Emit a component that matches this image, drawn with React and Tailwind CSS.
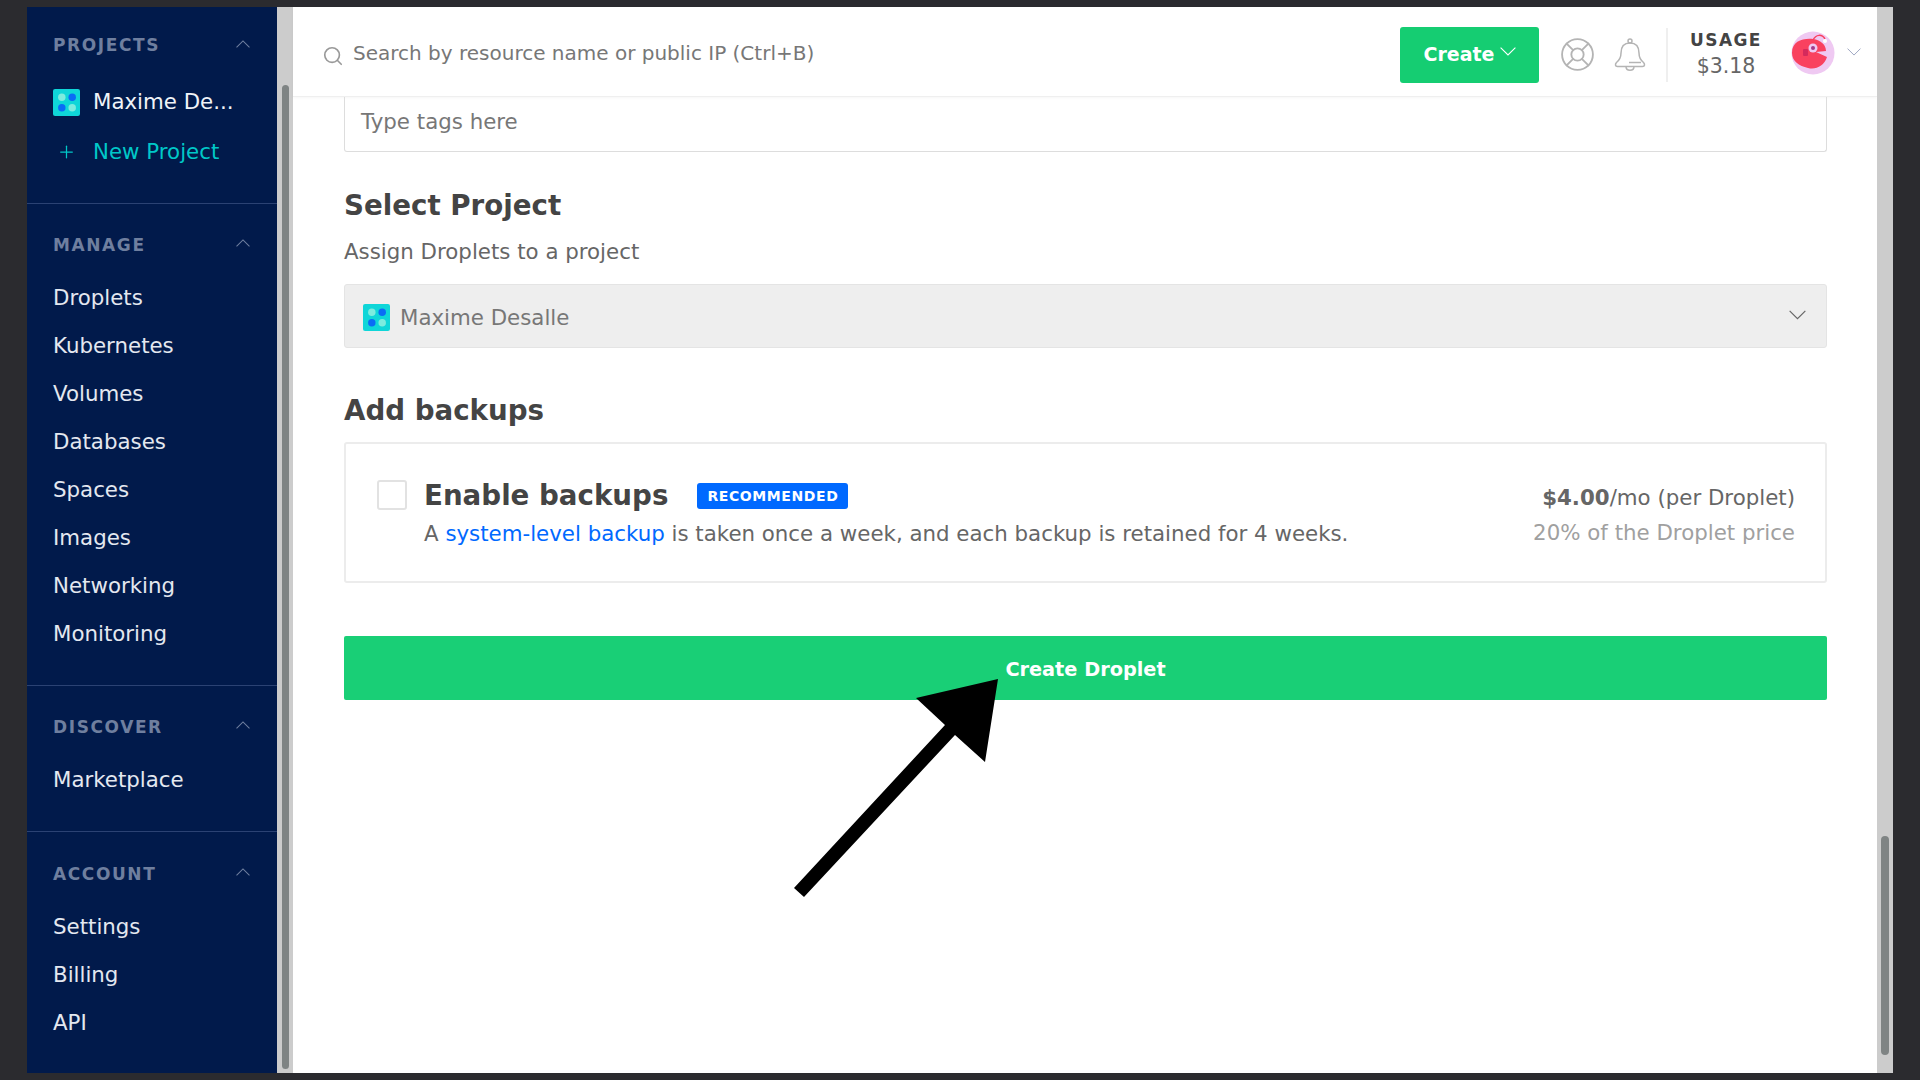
import React from "react";
import { Plus, Search, LifeBuoy } from "lucide-react";

const Logo = ({ className }) => (
  <svg viewBox="0 0 26 26" className={className}>
    <rect width="26" height="26" rx="2" fill="#0fd6d8" />
    <circle cx="8.5" cy="8" r="3.6" fill="#7cecdf" />
    <circle cx="18.5" cy="8" r="3.6" fill="#0a6cf5" />
    <circle cx="8.5" cy="18" r="3.6" fill="#0a6cf5" />
    <circle cx="18.5" cy="18" r="3.6" fill="#7cecdf" />
  </svg>
);

const ChevD = ({ className }) => (
  <svg viewBox="0 0 16 9" fill="none" stroke="currentColor" strokeWidth="1.1" className={className}>
    <polyline points="0.6,0.6 8,8 15.4,0.6" />
  </svg>
);
const ChevU = ({ className }) => (
  <svg viewBox="0 0 16 9" fill="none" stroke="currentColor" strokeWidth="1.2" className={className}>
    <polyline points="0.6,8.4 8,1 15.4,8.4" />
  </svg>
);

const Section = ({ title, items, last }) => (
  <div className={last ? "pl-[26px] pr-[27px] pt-[33px]" : "pl-[26px] pr-[27px] pt-[32px] pb-[27px] border-b border-[#2b4273]"}>
    <div className="flex items-center justify-between h-[20px] mb-[18px]">
      <span className="text-[17px] font-bold tracking-[1.6px] text-[#6f7f9f]">{title}</span>
      <ChevU className="w-[14px] h-[8px] text-[#6f7f9f] -mt-[6px]" />
    </div>
    <div className="flex flex-col">
      {items.map((t) => (
        <div key={t} className="h-[48px] flex items-center text-[21.33px] text-[#e4e8f0]">{t}</div>
      ))}
    </div>
  </div>
);

export default function App() {
  return (
    <div className="relative w-screen h-screen overflow-hidden bg-[#2b2b2f] px-[27px] py-[7px] font-['DejaVu_Sans',sans-serif]">
      <div className="flex h-full">
        <aside className="w-[250px] shrink-0 bg-[#011a4b] overflow-hidden">
          <div className="pt-[29px] pl-[26px] pr-[27px] pb-[26px] border-b border-[#2b4273]">
            <div className="flex items-center justify-between h-[20px] mb-[21px]">
              <span className="text-[17px] font-bold tracking-[1.6px] text-[#6f7f9f]">PROJECTS</span>
              <ChevU className="w-[14px] h-[8px] text-[#6f7f9f] -mt-[4px]" />
            </div>
            <div className="flex items-center h-[50px] gap-[13px]">
              <Logo className="w-[27px] h-[27px]" />
              <span className="text-[21.33px] text-[#f0f3f8]">Maxime De...</span>
            </div>
            <div className="flex items-center h-[50px] gap-[13px] text-[#00c8c8]">
              <Plus className="w-[27px] h-[20px]" strokeWidth={1.5} />
              <span className="text-[21.33px]">New Project</span>
            </div>
          </div>
          <Section title="MANAGE" items={["Droplets", "Kubernetes", "Volumes", "Databases", "Spaces", "Images", "Networking", "Monitoring"]} />
          <Section title="DISCOVER" items={["Marketplace"]} />
          <Section title="ACCOUNT" items={["Settings", "Billing", "API"]} last />
        </aside>

        <div className="w-[16px] shrink-0 bg-[#cccccc] pl-[5px] pr-[4px] pt-[78px] pb-[4px]">
          <div className="h-full rounded-full bg-[#7f8484]" />
        </div>

        <main className="flex-1 min-w-0 bg-white flex flex-col">
          <header className="h-[90px] shrink-0 flex items-center border-b border-[#efefef] shadow-[0_1px_3px_rgba(0,0,0,0.04)] pl-[29px] pr-[13px] pt-[6px]">
            <Search className="w-[22px] h-[22px] text-[#999999] mt-[2px]" strokeWidth={1.8} />
            <span className="ml-[9px] text-[20px] text-[#777777] -mt-[4px]">Search by resource name or public IP (Ctrl+B)</span>
            <div className="flex-1" />
            <button className="w-[139px] h-[56px] rounded-[3px] bg-[#15cd72] text-white font-bold text-[19px] flex items-center justify-center gap-[5px]">
              Create<ChevD className="w-[16px] h-[9px] -mt-[6px]" />
            </button>
            <LifeBuoy className="ml-[20px] w-[37px] h-[37px] text-[#b4b4b4]" strokeWidth={1.2} />
            <svg viewBox="0 0 32 34" fill="none" stroke="#b4b4b4" strokeWidth="1.5" className="ml-[18px] w-[32px] h-[34px]">
              <circle cx="16" cy="3" r="2" />
              <path d="M16 5 C9 5 7 10 7 15 C7 20 5.5 22 2.5 24.5 C1 26 1 28.5 3.5 28.5 L28.5 28.5 C31 28.5 31 26 29.5 24.5 C26.5 22 25 20 25 15 C25 10 23 5 16 5 Z" />
              <path d="M12 28.5 C12 33.5 20 33.5 20 28.5" />
              <path d="M15 24.5 L27 24.5" />
            </svg>
            <div className="ml-[20px] w-[2px] h-[54px] bg-[#efefef]" />
            <div className="w-[116px] flex flex-col items-center">
              <span className="text-[17px] font-bold tracking-[1.4px] text-[#444444] leading-[24px] -mt-[1px]">USAGE</span>
              <span className="text-[20.5px] text-[#666666] leading-[28px]">$3.18</span>
            </div>
            <svg viewBox="0 0 44 44" className="ml-[7px] w-[44px] h-[44px] -mt-[3px]">
              <circle cx="22" cy="22" r="21.5" fill="#efc9f2" />
              <path d="M1 22 C1 10 12 7 22 8 C30 9 35 14 35 20 L25 21 L36 26 C33 35 25 39 17 37 C8 35 1 30 1 22 Z" fill="#f9415f" />
              <circle cx="22" cy="17" r="4.5" fill="#efc9f2" />
              <circle cx="22" cy="17" r="2" fill="#a23a8a" />
              <rect x="12" y="18" width="5" height="7" rx="1" fill="#d42a5c" />
              <path d="M22 9 C25 3 31 3 34 8" stroke="#f9415f" strokeWidth="1.5" fill="none" />
              <circle cx="34" cy="10" r="2" fill="#fff" />
            </svg>
            <div className="ml-[9px] w-[20px] flex justify-center -mt-[6px]">
              <ChevD className="w-[14px] h-[8px] text-[#9aa3c0]" />
            </div>
          </header>

          <div className="pl-[51px] pr-[50px] flex flex-col">
            <div className="h-[55px] border border-t-0 border-[#dddddd] rounded-b-[3px] pl-[16px] pb-[4px] flex items-center text-[21.33px] text-[#777777]">Type tags here</div>
            <h2 className="mt-[36px] text-[27.7px] leading-[36px] font-bold text-[#444444]">Select Project</h2>
            <p className="mt-[15px] text-[21.33px] leading-[26px] text-[#666666]">Assign Droplets to a project</p>
            <div className="mt-[19px] h-[64px] rounded-[3px] bg-[#eeeeee] border border-[#e4e4e4] flex items-center pl-[18px] pr-[20px]">
              <Logo className="w-[27px] h-[27px] mt-[2px]" />
              <span className="ml-[10px] text-[21.33px] text-[#777777] mt-[4px]">Maxime Desalle</span>
              <div className="flex-1" />
              <ChevD className="w-[17px] h-[10px] text-[#666666] -mt-[3px]" />
            </div>
            <h2 className="mt-[45px] text-[27.7px] leading-[36px] font-bold text-[#444444]">Add backups</h2>
            <div className="mt-[13px] h-[141px] border-2 border-[#ececec] rounded-[3px] flex items-start pl-[31px] pr-[30px] pt-[34px]">
              <div className="w-[30px] h-[30px] mt-[2px] rounded-[3px] border-2 border-[#e2e2e2] shrink-0" />
              <div className="ml-[17px]">
                <div className="flex items-center h-[36px]">
                  <span className="text-[27.7px] font-bold text-[#444444]">Enable backups</span>
                  <span className="ml-[29px] h-[26px] px-[10px] rounded-[3px] bg-[#0069ff] text-white text-[14px] font-bold tracking-[0.6px] flex items-center">RECOMMENDED</span>
                </div>
                <p className="mt-[5px] text-[21.33px] leading-[30px] text-[#666666]">
                  A <span className="text-[#0069ff]">system-level backup</span> is taken once a week, and each backup is retained for 4 weeks.
                </p>
              </div>
              <div className="flex-1" />
              <div className="text-right text-[21.33px] leading-[35px] mt-[2px]">
                <p className="text-[#666666]"><b>$4.00</b>/mo (per Droplet)</p>
                <p className="text-[#a0a0a0]">20% of the Droplet price</p>
              </div>
            </div>
            <button className="mt-[53px] h-[64px] pt-[4px] rounded-[2px] bg-[#19cf76] text-white font-bold text-[19.3px]">Create Droplet</button>
          </div>
        </main>

        <div className="w-[16px] shrink-0 bg-[#cccccc] pl-[4px] pr-[4px] pt-[829px] pb-[18px]">
          <div className="h-full rounded-full bg-[#7f8484]" />
        </div>
      </div>

      <svg viewBox="0 0 1920 1080" className="absolute inset-0 w-[1920px] h-[1080px] pointer-events-none">
        <polygon points="998,679 916,698 945,725 794,888 804,897 955,735 985,762" fill="#000" />
      </svg>
    </div>
  );
}
